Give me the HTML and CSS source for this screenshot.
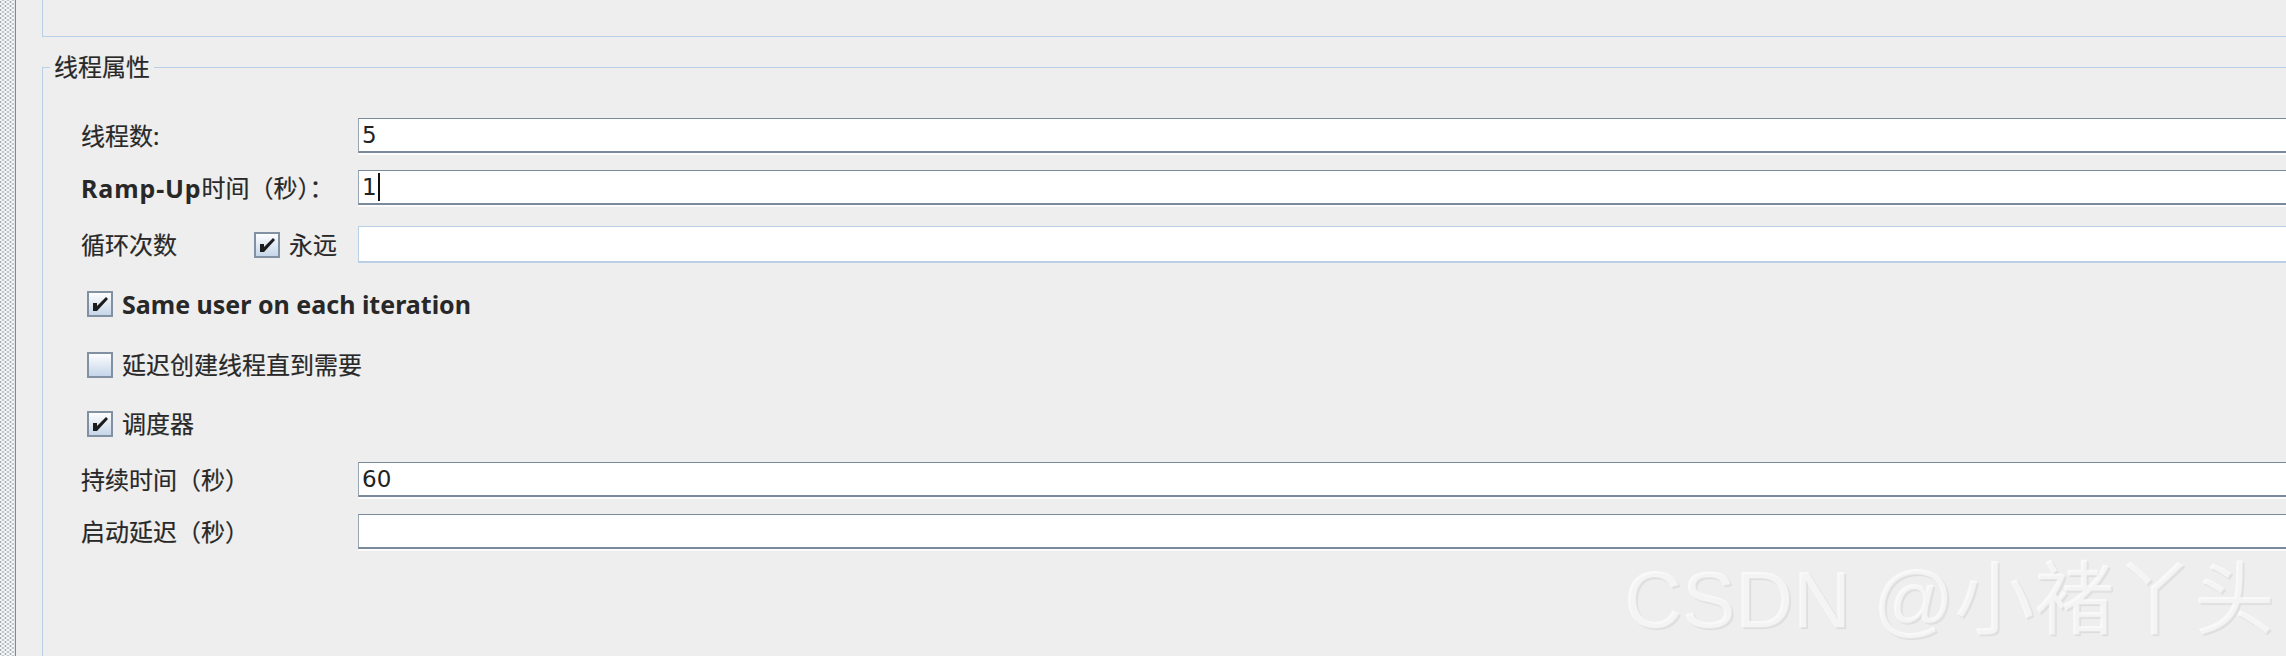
FILE: index.html
```html
<!DOCTYPE html>
<html lang="zh-CN">
<head>
<meta charset="utf-8">
<title>线程组</title>
<link rel="stylesheet" href="styles.css">
</head>
<body>
<div class="app">
  <div class="gutter"></div>
  <div class="divider"></div>
  <main class="content">
    <div class="topbox"></div>
    <fieldset class="group">
      <legend>线程属性</legend>
      <div class="rows">
        <div class="row r1">
          <label class="lbl">线程数:</label>
          <div class="field">5</div>
        </div>
        <div class="row r2">
          <label class="lbl"><span class="en ramp">Ramp-Up</span>时间（秒）：</label>
          <div class="field">1<span class="caret"></span></div>
        </div>
        <div class="row r3">
          <div class="lbl loop">
            <span class="loop-text">循环次数</span>
            <span class="cb"><svg viewBox="0 0 22 22" width="22" height="22"><polygon points="4,10 8,10 8,13 17,4 19,6 8,18 4,18"/></svg></span>
            <span class="cb-text">永远</span>
          </div>
          <div class="field disabled"></div>
        </div>
        <div class="row check-row r4">
          <span class="cb"><svg viewBox="0 0 22 22" width="22" height="22"><polygon points="4,10 8,10 8,13 17,4 19,6 8,18 4,18"/></svg></span>
          <span class="cb-text en">Same user on each iteration</span>
        </div>
        <div class="row check-row r5">
          <span class="cb"></span>
          <span class="cb-text">延迟创建线程直到需要</span>
        </div>
        <div class="row check-row r6">
          <span class="cb"><svg viewBox="0 0 22 22" width="22" height="22"><polygon points="4,10 8,10 8,13 17,4 19,6 8,18 4,18"/></svg></span>
          <span class="cb-text">调度器</span>
        </div>
        <div class="row r7">
          <label class="lbl">持续时间（秒）</label>
          <div class="field">60</div>
        </div>
        <div class="row r8">
          <label class="lbl">启动延迟（秒）</label>
          <div class="field"></div>
        </div>
      </div>
    </fieldset>
  </main>
  <div class="watermark">CSDN @小褚丫头</div>
</div>
</body>
</html>
```

FILE: styles.css
```css
* { box-sizing: border-box; }
html, body { margin: 0; padding: 0; }
body {
  background: #eeeeee;
  width: 2286px;
  height: 656px;
  overflow: hidden;
  font-family: "Noto Sans", "Noto Sans CJK SC", sans-serif;
  color: #282828;
}
.app {
  position: relative;
  display: flex;
  height: 656px;
}
.gutter {
  width: 15px;
  flex-shrink: 0;
  background-color: #f7f7f7;
  background-image:
    radial-gradient(circle, #9eaab6 0.9px, transparent 1.2px),
    radial-gradient(circle, #9eaab6 0.9px, transparent 1.2px);
  background-size: 5px 4px, 5px 4px;
  background-position: 3px 0, 5.5px 2px;
}
.divider {
  width: 1px;
  flex-shrink: 0;
  background: #7c8a98;
}
.content {
  flex: 1;
  min-width: 0;
  display: flex;
  flex-direction: column;
  padding-left: 26px;
}
.topbox {
  height: 37px;
  flex-shrink: 0;
  border-left: 1px solid #b9cfe5;
  border-bottom: 1px solid #b9cfe5;
}
.group {
  flex: 1;
  min-width: 0;
  margin: 16px 0 0;
  padding: 0;
  border: 1px solid #b9cfe5;
  border-right: 0;
  border-bottom: 0;
}
.group legend {
  margin-left: 7px;
  padding: 0 4px;
  font-size: 24px;
  line-height: 28px;
  font-weight: 400;
  -webkit-text-stroke: 0.2px #282828;
}
.rows {
  display: flex;
  flex-direction: column;
  padding-left: 38px;
}
.row {
  display: flex;
  align-items: center;
}
.lbl {
  width: 277px;
  flex-shrink: 0;
  font-size: 24px;
  line-height: 30px;
  font-weight: 400;
  -webkit-text-stroke: 0.2px #282828;
  white-space: nowrap;
  display: flex;
  align-items: center;
}
.en {
  font-weight: 700;
  font-size: 25px;
  -webkit-text-stroke: 0;
}
.ramp { letter-spacing: 0.9px; }
.field {
  flex: 1;
  height: 35px;
  background: #ffffff;
  border-top: 1px solid #7b8a9a;
  border-left: 1px solid #97a5b3;
  border-bottom: 2px solid #7b8a9a;
  box-shadow: 0 2px 0 #fbfbfb;
  font-family: "DejaVu Sans", sans-serif;
  font-size: 23px;
  font-weight: 400;
  -webkit-text-stroke: 0;
  color: #222;
  padding-left: 3px;
  display: flex;
  align-items: center;
}
.field.disabled {
  height: 37px;
  border-color: #b9cfe5;
  box-shadow: none;
}
.caret {
  display: inline-block;
  width: 2px;
  height: 28px;
  background: #111;
  margin-left: 1px;
}
.loop-text { width: 173px; flex-shrink: 0; }
.cb {
  width: 26px;
  height: 26px;
  flex-shrink: 0;
  border: 2px solid #8191a1;
  background: linear-gradient(#fdfdfe, #c6d6e9);
  display: flex;
  align-items: center;
  justify-content: center;
  -webkit-text-stroke: 0;
}
.cb svg { fill: #1c1c1c; }
.cb-text {
  margin-left: 9px;
  font-size: 24px;
  line-height: 30px;
  font-weight: 400;
  -webkit-text-stroke: 0.2px #282828;
  white-space: nowrap;
}
.cb-text.en {
  font-size: 25px;
  font-weight: 700;
  -webkit-text-stroke: 0;
}
.check-row { padding-left: 6px; height: 26px; }
.r1 { margin-top: 37px; }
.r2 { margin-top: 17px; }
.r3 { margin-top: 21px; }
.r4 { margin-top: 28px; }
.r5 { margin-top: 35px; }
.r6 { margin-top: 33px; }
.r7 { margin-top: 25px; }
.r8 { margin-top: 17px; }
.watermark {
  position: absolute;
  right: 11px;
  bottom: 15px;
  font-family: "Liberation Sans", "Noto Sans CJK SC", sans-serif;
  font-size: 80px;
  line-height: 80px;
  color: rgba(255, 255, 255, 0.25);
  text-shadow: -1px -1px 0 rgba(255, 255, 255, 0.6), 1px 1px 1px rgba(0, 0, 0, 0.08);
  white-space: nowrap;
  pointer-events: none;
}
```
